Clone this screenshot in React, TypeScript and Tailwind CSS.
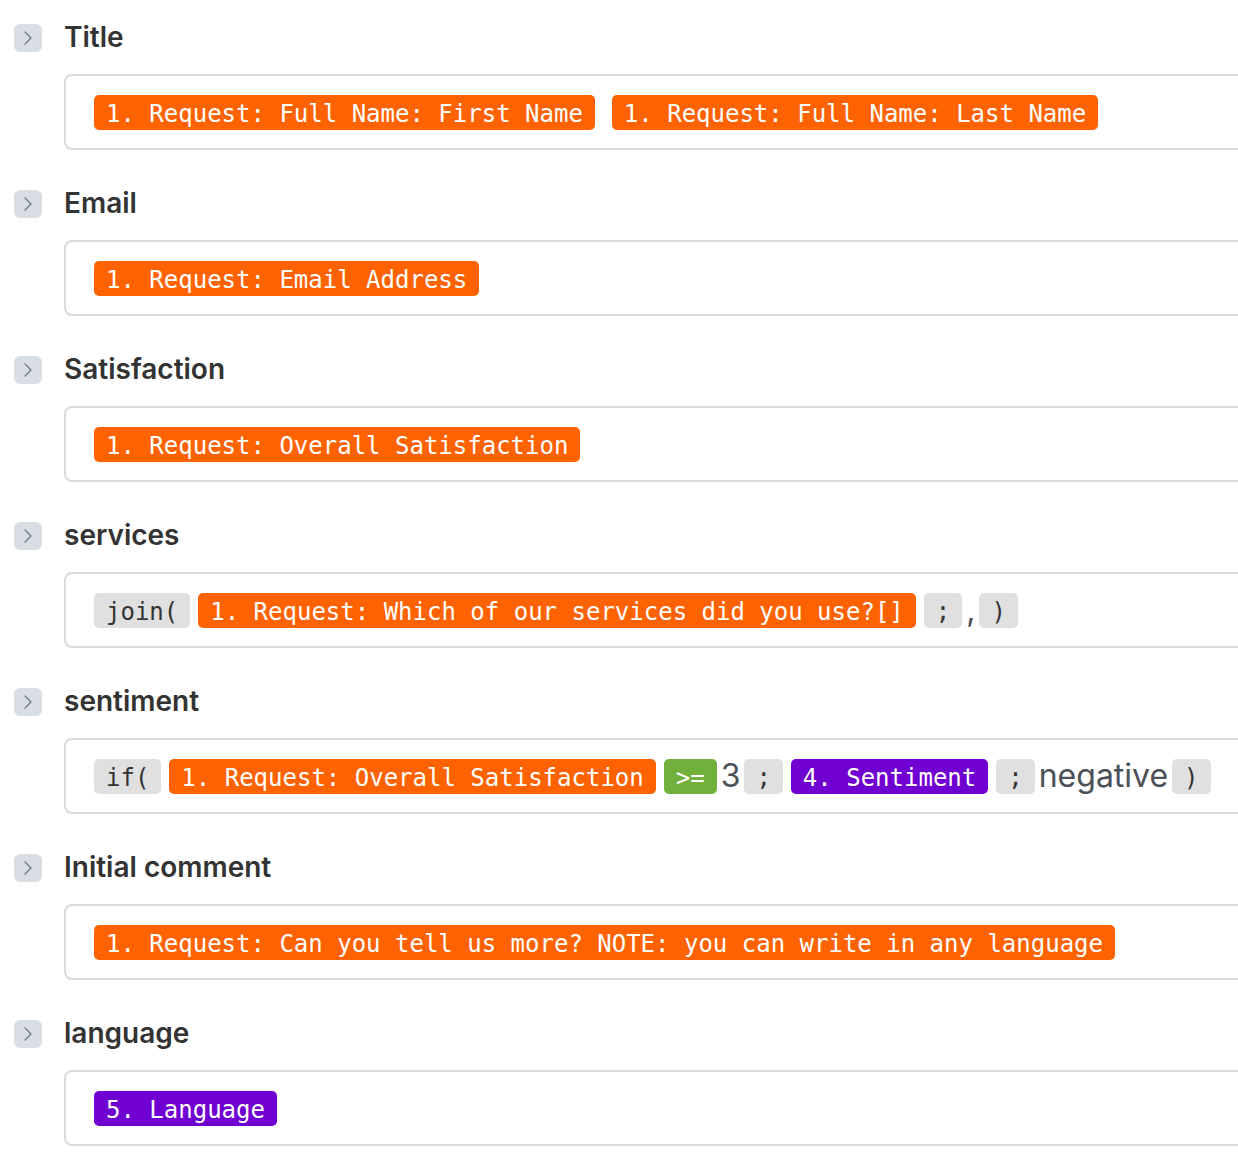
import { ChevronRight } from "lucide-react";

type Token =
  | { kind: "ref"; text: string; color: "orange" | "purple" }
  | { kind: "op"; text: string }
  | { kind: "fn"; text: string }
  | { kind: "text"; text: string };

interface Field {
  name: string;
  tokens: Token[];
}

const fields: Field[] = [
  {
    name: "Title",
    tokens: [
      { kind: "ref", text: "1. Request: Full Name: First Name", color: "orange" },
      { kind: "text", text: " " },
      { kind: "ref", text: "1. Request: Full Name: Last Name", color: "orange" },
    ],
  },
  {
    name: "Email",
    tokens: [{ kind: "ref", text: "1. Request: Email Address", color: "orange" }],
  },
  {
    name: "Satisfaction",
    tokens: [{ kind: "ref", text: "1. Request: Overall Satisfaction", color: "orange" }],
  },
  {
    name: "services",
    tokens: [
      { kind: "fn", text: "join(" },
      { kind: "ref", text: "1. Request: Which of our services did you use?[]", color: "orange" },
      { kind: "fn", text: ";" },
      { kind: "text", text: "," },
      { kind: "fn", text: ")" },
    ],
  },
  {
    name: "sentiment",
    tokens: [
      { kind: "fn", text: "if(" },
      { kind: "ref", text: "1. Request: Overall Satisfaction", color: "orange" },
      { kind: "op", text: ">=" },
      { kind: "text", text: "3" },
      { kind: "fn", text: ";" },
      { kind: "ref", text: "4. Sentiment", color: "purple" },
      { kind: "fn", text: ";" },
      { kind: "text", text: "negative" },
      { kind: "fn", text: ")" },
    ],
  },
  {
    name: "Initial comment",
    tokens: [
      { kind: "ref", text: "1. Request: Can you tell us more? NOTE: you can write in any language", color: "orange" },
    ],
  },
  {
    name: "language",
    tokens: [{ kind: "ref", text: "5. Language", color: "purple" }],
  },
];

const mono = "font-['DejaVu_Sans_Mono',monospace]";

function Chip({ token }: { token: Token }) {
  if (token.kind === "text") {
    return (
      <span className="text-[32px] leading-none text-[#4b5058] whitespace-pre">
        {token.text}
      </span>
    );
  }
  let cls = "bg-[#e0e0e0] text-[#333]";
  if (token.kind === "ref") {
    cls = token.color === "orange" ? "bg-[#ff6200] text-white" : "bg-[#7000d1] text-white";
  } else if (token.kind === "op") {
    cls = "bg-[#71b03a] text-white";
  }
  return (
    <span
      className={`${mono} ${cls} mx-1 h-[35px] leading-[38px] overflow-hidden px-3 rounded-[5px] text-[24px] whitespace-pre`}
    >
      {token.text}
    </span>
  );
}

export default function App() {
  return (
    <div className="bg-white min-h-screen overflow-hidden font-['Inter',sans-serif] pt-6 pl-[14px]">
      {fields.map((field) => (
        <div key={field.name} className="mb-10">
          <div className="flex items-center gap-[22px] h-7">
            <button className="w-7 h-7 rounded-md bg-[#d9dee5] flex items-center justify-center text-[#6b7785]">
              <ChevronRight className="w-6 h-6" strokeWidth={1.3} />
            </button>
            <span className="text-[28px] font-semibold text-[#333] leading-none -mt-[2px]">{field.name}</span>
          </div>
          <div className="ml-[50px] mt-[22px] w-[1300px] h-[76px] border-2 border-[#dadada] rounded-lg flex items-center pl-6">
            {field.tokens.map((t, i) => (
              <Chip key={i} token={t} />
            ))}
          </div>
        </div>
      ))}
    </div>
  );
}
